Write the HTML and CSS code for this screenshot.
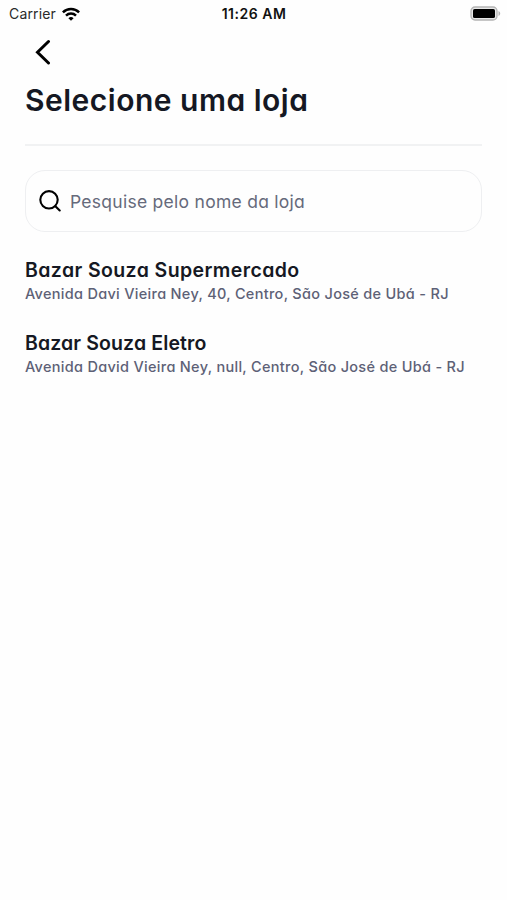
FILE: index.html
```html
<!DOCTYPE html>
<html lang="pt-BR">
<head>
<meta charset="utf-8">
<meta name="viewport" content="width=device-width, initial-scale=1">
<title>Selecione uma loja</title>
<link rel="stylesheet" href="styles.css">
</head>
<body>
<header class="status-bar">
  <div class="network">
    <span class="carrier">Carrier</span>
    <svg class="wifi" width="18" height="14" viewBox="0 0 18 14" fill="none" stroke="#000" stroke-width="2.5">
      <path d="M.9 5.3a11.6 11.6 0 0 1 16.2 0"/>
      <path d="M4 8.6a7.2 7.2 0 0 1 10 0"/>
      <path d="M9 13.8 6.4 11.2a3.8 3.8 0 0 1 5.2 0Z" fill="#000" stroke="none"/>
    </svg>
  </div>
  <span class="clock">11:26 AM</span>
  <svg class="battery" width="31" height="15" viewBox="0 0 31 15">
    <rect x="1" y="1" width="26" height="13" rx="4" fill="#e8e8e8" stroke="#b4b4b4" stroke-width="1.3"/>
    <rect x="3" y="3" width="22" height="9" rx="1.6" fill="#000"/>
    <path d="M28.5 5v5c1-.4 1.7-1.3 1.7-2.5s-.7-2.1-1.7-2.5Z" fill="#b4b4b4"/>
  </svg>
</header>
<main class="screen">
  <button class="back" type="button" aria-label="Voltar">
    <svg width="18" height="26" viewBox="0 0 18 26" fill="none" stroke="#000" stroke-width="3" stroke-linecap="round" stroke-linejoin="miter">
      <path d="M14.5 2.5 3.5 13.300 14.5 24"/>
    </svg>
  </button>
  <h1 class="title">Selecione uma loja</h1>
  <hr class="divider">
  <div class="search">
    <svg width="22" height="22" viewBox="0 0 22 22" fill="none" stroke="#000" stroke-width="2.1" stroke-linecap="round">
      <circle cx="10" cy="9.800" r="8.700"/>
      <path d="m16.400 16.200 4.300 4.200"/>
    </svg>
    <span class="placeholder">Pesquise pelo nome da loja</span>
  </div>
  <ul class="stores">
    <li class="store">
      <h2 class="name name-long">Bazar Souza Supermercado</h2>
      <p class="address">Avenida Davi Vieira Ney, 40, Centro, São José de Ubá - RJ</p>
    </li>
    <li class="store">
      <h2 class="name">Bazar Souza Eletro</h2>
      <p class="address">Avenida David Vieira Ney, null, Centro, São José de Ubá - RJ</p>
    </li>
  </ul>
</main>
</body>
</html>
```
FILE: styles.css
```css
* { box-sizing: border-box; margin: 0; padding: 0; }
body {
  min-height: 900px;
  background: #fefefe;
  color: #151823;
  font-family: Inter, "Liberation Sans", sans-serif;
}
.status-bar {
  display: grid;
  grid-template-columns: 1fr auto 1fr;
  align-items: center;
  height: 27px;
  padding: 0 6px 0 9px;
  color: #111;
}
.network { display: flex; align-items: center; gap: 6px; }
.carrier { font-size: 14px; letter-spacing: .15px; color: #2a2a2a; }
.clock { margin-right: 2px; font-size: 14px; font-weight: 600; letter-spacing: .5px; }
.battery { justify-self: end; }
.screen {
  padding: 0 25px;
  font-feature-settings: "cv11";
}
.back { display: block; height: 26px; margin: 12px 0 0 9px; border: 0; background: none; }
.back svg { display: block; }
.title { margin-top: 15px; font-size: 30px; line-height: 40px; font-weight: 600; letter-spacing: .5px; white-space: nowrap; }
.divider { height: 2px; margin-top: 24px; border: 0; background: #f1f2f3; }
.search {
  display: flex;
  align-items: center;
  gap: 9px;
  height: 62px;
  margin-top: 24px;
  padding: 0 13px;
  border: 1.5px solid #eeeff1;
  border-radius: 20px;
}
.placeholder { font-size: 17.5px; letter-spacing: .27px; color: #666a7b; white-space: nowrap; }
.stores { margin-top: 25px; list-style: none; }
.store { height: 73px; }
.name { font-size: 19.5px; line-height: 27px; font-weight: 600; letter-spacing: .12px; white-space: nowrap; }
.name-long { letter-spacing: .4px; }
.address { font-size: 14.5px; line-height: 20px; font-weight: 500; letter-spacing: .3px; color: #5d6176; white-space: nowrap; }
```
